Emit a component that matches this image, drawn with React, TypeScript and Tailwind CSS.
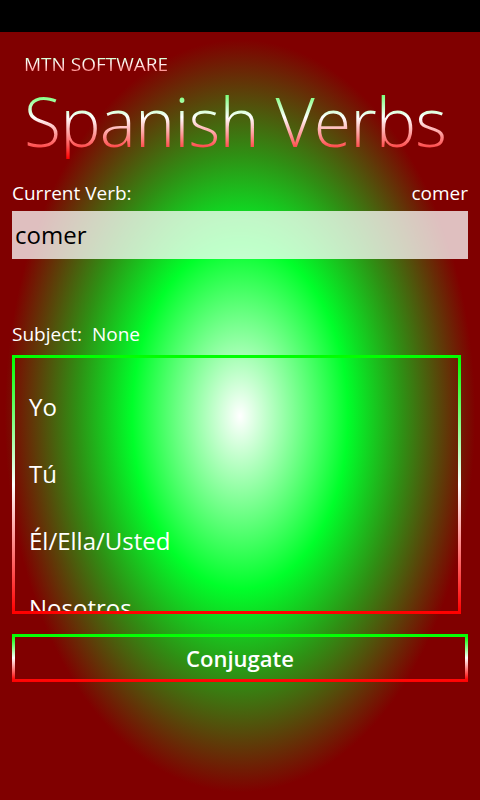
import React from "react";

const subjects = ["Yo", "Tú", "Él/Ella/Usted", "Nosotros", "Vosotros", "Ellos/Ellas/Ustedes"];

export default function App() {
  return (
    <div className="w-[480px] h-[800px] flex flex-col overflow-hidden text-white" style={{ fontFamily: '"Open Sans", "Noto Sans", sans-serif' }}>
      <div className="h-8 bg-black shrink-0" />
      <main className="flex-1 flex flex-col px-3 bg-[radial-gradient(ellipse_240px_384px_at_240px_384px,#ffffff_0%,#00ff2a_45%,#2f8f14_68%,#800000_98%)]">
        <div className="mt-[20px] pl-3 text-[19px] leading-6 bg-[linear-gradient(to_bottom,#a0ffa0,#ffffff_45%,#ff5050)] bg-clip-text text-transparent w-fit">
          MTN SOFTWARE
        </div>
        <h1 className="mt-[7px] pl-3 text-[68px] font-light leading-[76px] tracking-[-0.9px] bg-[linear-gradient(to_bottom,#60ff60_10%,#ffffff_45%,#ff6060_80%,#ff0000)] bg-clip-text text-transparent w-fit">
          Spanish Verbs
        </h1>
        <div className="mt-[22px] flex justify-between items-end text-[19px] leading-6">
          <span>Current Verb:</span>
          <span>comer</span>
        </div>
        <div className="mt-[6px] h-12 bg-white/75 flex items-center px-[3px] text-black text-[24px]">
          comer
        </div>
        <div className="mt-[63px] text-[19px] leading-6">
          Subject:&nbsp; None
        </div>
        <div className="mt-[9px] mr-[7px] h-[259px] border-[3px] border-solid [border-image:linear-gradient(to_bottom,#00ff00,#ffffff_50%,#ff0000)_1] overflow-hidden">
          <ul className="pt-[33px] pl-[14px]">
            {subjects.map((s) => (
              <li key={s} className="h-[67px] text-[24px] leading-8">
                {s}
              </li>
            ))}
          </ul>
        </div>
        <button className="mt-5 h-12 border-[3px] border-solid [border-image:linear-gradient(to_bottom,#00ff00,#ffffff_50%,#ff0000)_1] text-[22px] font-semibold text-white">
          Conjugate
        </button>
      </main>
    </div>
  );
}
